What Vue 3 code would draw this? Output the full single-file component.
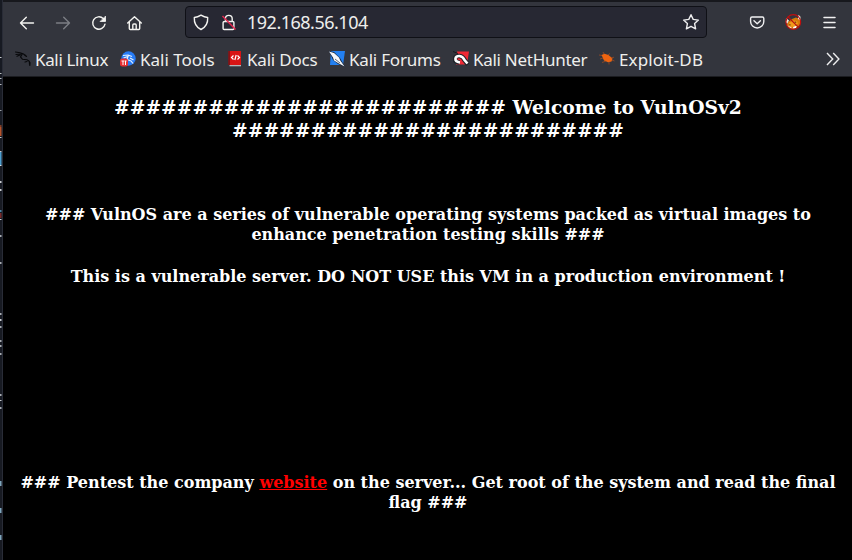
<script setup>
const marks = [
  { y: 57, h: 1, c: '#c9ccd0' }, { y: 73, h: 1, c: '#b9bdc2' }, { y: 78, h: 1, c: '#b9bdc2' },
  { y: 84, h: 1, c: '#b9bdc2' }, { y: 110, h: 1, c: '#9a9fa6' }, { y: 125, h: 2, c: '#7f3c24' },
  { y: 127, h: 9, c: '#b5522a' }, { y: 137, h: 1, c: '#c9ccd0' }, { y: 151, h: 1, c: '#c9ccd0' },
  { y: 152, h: 13, c: '#4d9fd0' }, { y: 165, h: 1, c: '#d4e4ee' }, { y: 181, h: 2, c: '#c9ccd0' },
  { y: 189, h: 2, c: '#c9ccd0' }, { y: 210, h: 2, c: '#4d86a8' }, { y: 213, h: 5, c: '#7a2b2b' },
  { y: 219, h: 1, c: '#c9ccd0' }, { y: 235, h: 2, c: '#a9adb3' }, { y: 262, h: 2, c: '#a9adb3' },
  { y: 313, h: 2, c: '#a9adb3' }, { y: 319, h: 2, c: '#c9ccd0' }, { y: 326, h: 2, c: '#a9adb3' },
  { y: 340, h: 2, c: '#a9adb3' }, { y: 345, h: 2, c: '#a9adb3' }, { y: 353, h: 2, c: '#a9adb3' },
  { y: 394, h: 2, c: '#a9adb3' }, { y: 400, h: 1, c: '#c9ccd0' }, { y: 407, h: 2, c: '#a9adb3' },
  { y: 481, h: 5, c: '#7fa6bd' }, { y: 508, h: 5, c: '#7fa6bd' }, { y: 535, h: 5, c: '#7fa6bd' },
]
const hashes = '#'.repeat(25)
</script>

<template>
  <div class="screen">
    <svg class="edge" width="3" height="560">
      <rect v-for="m in marks" :key="m.y" x="0" :y="m.y" width="1.5" :height="m.h" :fill="m.c" />
      <rect x="2" width="1" height="560" fill="#292c37" />
    </svg>
    <div class="browser">
      <header class="chrome">
        <div class="toolbar">
          <svg class="nav" width="150" height="32" viewBox="0 0 150 32" fill="none" stroke="#f4f4f1" stroke-width="1.4" stroke-linecap="round" stroke-linejoin="round">
            <path d="M17.5 17H30.500M23.300 11.200 17.500 17l5.800 5.800" />
            <path stroke="#7c7e84" d="M53.500 17H66.500M60.700 11.200 66.500 17l-5.800 5.800" />
            <path d="M102 18.200a6.200 6.200 0 1 1-1.800-5.700l1.800 1.800" />
            <path fill="#f4f4f1" stroke-width=".8" d="M102.500 10.500v5h-5z" />
            <path d="m124.700 17 6.800-6.300 6.800 6.300M126.300 16v6.500q0 1 1 1h8.400q1 0 1-1V16M129.800 23.300V19q0-1 1-1h1.400q1 0 1 1v4.300" />
          </svg>
          <div class="address">
            <svg width="54" height="30" viewBox="0 0 54 30" fill="none" stroke="#f4f4f1" stroke-width="1.400" stroke-linejoin="round">
              <path d="M15 8.200q3.300 2.200 6.700 2.300c.3 5.500-1.600 9.500-6.700 12-5.100-2.500-7-6.500-6.700-12q3.400-.1 6.700-2.300z" />
              <path d="M39.400 14.500v-2.700a3.400 3.400 0 0 1 6.800 0v2.700M38.700 14.500h8.200q1 0 1 1v6q0 1-1 1h-8.800q-1 0-1-1v-6q0-1 1.600-1z" />
              <path stroke="#e22850" stroke-width="1.500" d="m36.500 9 13 13.500" />
            </svg>
            <span class="url">192.168.56.104</span>
            <svg class="star" width="18" height="18" viewBox="0 0 18 18" fill="none" stroke="#eeeeef" stroke-width="1.400" stroke-linejoin="round">
              <path d="m9 1.700 2.200 4.700 5.200.7-3.800 3.500 1 5.200L9 13.300l-4.600 2.500 1-5.200L1.600 7.100l5.200-.7z" />
            </svg>
          </div>
          <svg class="tools" width="96" height="32" viewBox="0 0 96 32" fill="none" stroke="#f1f1f2" stroke-width="1.400" stroke-linecap="round" stroke-linejoin="round">
            <path d="M8 11h10.400q1.400 0 1.400 1.400v3a6.600 6.600 0 0 1-13.200 0v-3Q6.600 11 8 11zM10 14.800l3.200 3 3.200-3" />
            <g stroke="none">
              <path fill="#d87809" d="m44 16 4-3 4-1.500 4 2 .5 4-2.500 3.500-5 2-4-1-2-3z" />
              <path fill="#f29a1c" d="m45 17 4-2.500 4 .5 1 2.500-4 3-4 .5z" />
              <path fill="#f1ead9" d="m42 12 3 2.500-2 3.500-1.200-2zM54.500 8.800l2 2-.2 4-2.500-2zM43 19l3.500 2 2.500 1.500-3-.3z" />
              <path fill="#fff" d="m49 21 4-1.500-1 2.500-2.500.8z" />
              <path fill="#402717" d="m45.200 18 2 1-1.500.6zM50.800 15.500l2 .6-2 .9z" />
            </g>
            <circle cx="49.300" cy="16" r="7.400" stroke="#c20e0e" stroke-width="1.100" />
            <path stroke="#b51010" stroke-width="1.100" d="m44.200 11 10.300 10.300" />
            <path stroke-width="1.500" d="M80 11.500h11M80 16.500h11M80 21.500h11" />
          </svg>
        </div>
        <nav class="bookmarks">
          <a class="mark linux"><svg viewBox="0 0 16 16" fill="none" stroke="#08090b" stroke-width="1.150" stroke-linecap="round"><path d="M.5 1 5 1.700l3 1 2.800 1.800M1 3.500l5-.5M2 5.300l3.500-1.500M7 3.500 5.500 6l2 2.300 4.500.5 2.300 1.500.2 3M9.500 4l2 1.500M13.500 9.500l1.500 2.200-.2 2.800M10 11l2-.5" /></svg><span>Kali Linux</span></a>
          <a class="mark tools-link"><svg viewBox="0 0 16 16"><circle cx="8.500" cy="7.500" r="7.200" fill="#277bf5" /><path d="M3 4.500 8 4l4 1.500M3.500 7 8 5.500l-1 3 4 1.500 2 2.500M10 7l3.500 2" fill="none" stroke="#e5f0ff" stroke-width="1.200" /><rect y="7.500" width="8" height="8" rx="2.300" fill="#e62f32" /><path d="M1.500 10h2.500M3 10v4M4.500 10H6.500M5.500 10v4" fill="none" stroke="#fff" /></svg><span>Kali Tools</span></a>
          <a class="mark docs"><svg viewBox="0 0 16 16"><path fill="#d81414" d="M1.500 0H14v14H1.500z" /><path fill="#651015" d="M1.500 0h1.200v14H1.500z" /><path fill="#b5b5b8" d="M2.500 14H14v1.300H2.500z" /><path fill="none" stroke="#fff" stroke-width="1.200" d="m6.500 4.500-2 2 2 2M10.500 4.500l2 2-2 2M9.200 4 7.800 9" /></svg><span>Kali Docs</span></a>
          <a class="mark forums"><svg viewBox="0 0 16 16"><path fill="#2380f1" d="M2 0h14l-2 14H1z" /><path fill="#14253b" d="m0 0 5 1 6 6 5 9-7-3-5-4z" /><path fill="#f4f6fa" d="m0 .5 5 1.500 5 4.500 1.300 3L15.500 15.500 9 12 5 9.500 4 6.500z" /><path stroke="#3a4350" stroke-width=".8" d="m6 8 5 4" /></svg><span>Kali Forums</span></a>
          <a class="mark hunter"><svg viewBox="0 0 16 16"><path fill="#ef2934" d="M4 .5h12l-2 13H3z" /><path fill="none" stroke="#20242a" stroke-width="4.600" d="M6.500 11.500C-.5 10.500 1 4.500 6.500 5q3.500.5 5 4l3.500 4.500" /><path fill="none" stroke="#fff" stroke-width="2.600" d="M7 11.500C0 10.500 2 4.500 6.500 5q3.500.5 5 4l3 3.500" /><path fill="none" stroke="#161a20" d="M0 .5l5 2" /></svg><span>Kali NetHunter</span></a>
          <a class="mark exploit"><svg viewBox="0 0 16 16"><path fill="#ef6410" d="m2.500 4 3-1.200 4 1.200 4 3.500-1 3-3.500.8-4-1.800z" /><path fill="none" stroke="#a9501f" stroke-width=".7" d="M3 4.500 0 4M5 3 4 1M9 4l2-1.500M12 7l3-.8M13 9l2.500 1M7 10l-4 1.500M10 11v2.500M4 7 1 8" /></svg><span>Exploit-DB</span></a>
          <svg class="more" width="14" height="14" viewBox="0 0 14 14" fill="none" stroke="#ededee" stroke-width="1.400"><path d="m1 1 5.700 6L1 13M7.200 1l5.700 6-5.700 6" /></svg>
        </nav>
      </header>
      <main class="page">
        <h3>{{ hashes }} Welcome to VulnOSv2<br />{{ hashes }}</h3>
        <h4 class="intro">### VulnOS are a series of vulnerable operating systems packed as virtual images to<br />enhance penetration testing skills ###</h4>
        <h4 class="warning">This is a vulnerable server. DO NOT USE this VM in a production environment !</h4>
        <h4 class="goal">### Pentest the company <a>website</a> on the server... Get root of the system and read the final<br />flag ###</h4>
      </main>
    </div>
  </div>
</template>

<style>
body { margin: 0; background: #000; }
</style>

<style scoped>
.screen { display: flex; width: 852px; height: 560px; overflow: hidden; background: #171a22; }
.edge { flex: none; display: block; }
.browser { width: 849px; height: 560px; display: flex; flex-direction: column; }
.chrome { height: 77px; box-sizing: border-box; background: #33353d; border-top: 2px solid #17181d; border-bottom: 1px solid #1b1c20; font-family: "Noto Sans", sans-serif; color: #eeeeec; }
.toolbar { display: flex; height: 40px; align-items: center; }
.nav { flex: none; margin-right: 32px; }
.address { width: 522px; height: 32px; box-sizing: border-box; border: 1px solid #0f1016; border-radius: 4px; background: #272833; display: flex; align-items: center; }
.address svg { flex: none; }
.url { margin-left: 7px; font-size: 18px; line-height: 24px; white-space: nowrap; letter-spacing: -0.5px; }
.star { margin-left: auto; margin-right: 6px; }
.tools { flex: none; margin-left: 37px; }
.bookmarks { display: flex; height: 34px; align-items: center; padding-left: 12px; }
.mark { flex: none; display: flex; align-items: center; white-space: nowrap; font-size: 17px; line-height: 24px; }
.mark svg { width: 16px; height: 16px; margin-right: 4px; }
.mark span { padding-top: 2px; }
.linux { width: 105px; letter-spacing: -0.35px; }
.tools-link { width: 107px; }
.docs { width: 102px; letter-spacing: -0.2px; }
.forums { width: 124px; letter-spacing: -0.2px; }
.hunter { width: 146px; letter-spacing: -0.28px; }
.exploit { width: 110px; letter-spacing: 0.1px; }
.more { margin-left: auto; margin-right: 12px; }
.page { flex: 1; padding: 19px 0 0 1px; background: #000; color: #fff; font-family: "DejaVu Serif", serif; text-align: center; }
h3, h4 { margin: 0; font-weight: bold; white-space: nowrap; }
h3 { font-size: 18.72px; line-height: 23px; }
h4 { font-size: 16px; line-height: 20px; }
.intro { margin-top: 63px; }
.warning { margin-top: 22px; }
.goal { margin-top: 186px; }
.goal a { color: #f00; text-decoration: underline; }
</style>
